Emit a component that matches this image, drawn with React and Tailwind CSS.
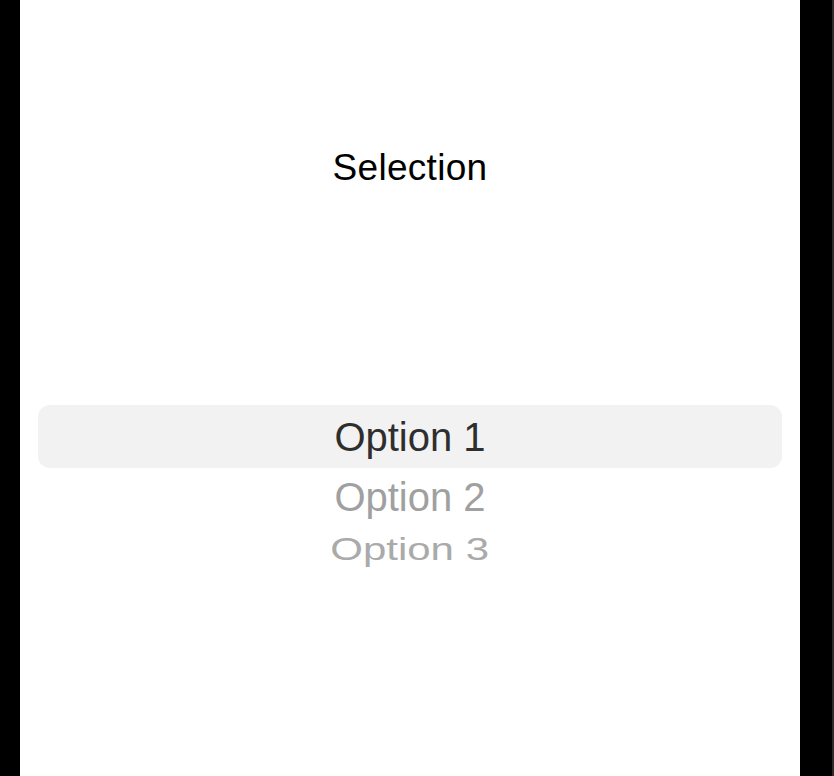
export default function App() {
  return (
    <div className="flex h-[776px] w-[834px] overflow-hidden" style={{ fontFamily: '"Liberation Sans", Arial, sans-serif' }}>
      <div className="w-[20px] bg-black" />
      <div className="flex flex-1 flex-col bg-white">
        <div className="mt-[148px] h-[40px] text-center text-[37px] leading-[40px] tracking-[0.3px] text-black">Selection</div>
        <div className="mx-[18px] mt-[217px] flex flex-col">
          <div className="flex h-[63px] items-center justify-center rounded-[12px] bg-[#f2f2f2] text-[40px] text-[#2e2e2e]">
            Option 1
          </div>
          <div className="flex h-[58px] items-center justify-center text-[40px] text-[#a0a0a0]">
            Option 2
          </div>
          <div className="flex h-[46px] items-center justify-center text-[40px] text-[#aaaaaa]">
            <span className="inline-block scale-x-105 scale-y-80">Option 3</span>
          </div>
        </div>
      </div>
      <div className="w-[32px] bg-black" />
      <div className="w-[2px] bg-[#2b2b2b]" />
    </div>
  );
}
